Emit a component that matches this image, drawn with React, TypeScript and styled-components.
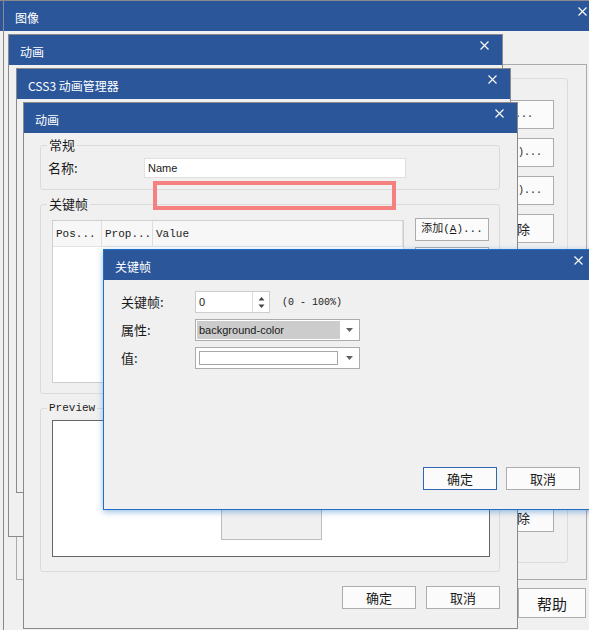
import React from "react";
import styled, { createGlobalStyle, css } from "styled-components";

const BLUE = "#2b579a";
const CJK = `"Noto Sans CJK SC", "Liberation Sans", sans-serif`;
const MONO = `"Liberation Mono", "Noto Sans CJK SC", monospace`;
const UI = `"Liberation Sans", "Noto Sans CJK SC", sans-serif`;

const GlobalStyle = createGlobalStyle`
  html, body { margin: 0; padding: 0; }
  body { background: #f0f0f0; font-family: ${CJK}; }
  * { box-sizing: border-box; }
`;

const Desktop = styled.div`
  position: relative;
  width: 589px;
  height: 630px;
  overflow: hidden;
  background: #f0f0f0;
`;

const Win = styled.div<{ $x: number; $y: number; $w: number; $h: number; $active?: boolean }>`
  position: absolute;
  left: ${(p) => p.$x}px;
  top: ${(p) => p.$y}px;
  width: ${(p) => p.$w}px;
  height: ${(p) => p.$h}px;
  display: flex;
  flex-direction: column;
  background: #f0f0f0;
  border: 1px solid ${(p) => (p.$active ? "#1f6fc5" : "#8a8a8a")};
  ${(p) =>
    p.$active &&
    css`
      box-shadow: 0 2px 6px rgba(40, 110, 200, 0.45);
    `}
`;

const TitleBar = styled.div`
  flex: none;
  height: 30px;
  background: ${BLUE};
  color: #fff;
  display: flex;
  align-items: flex-start;
  justify-content: space-between;
  padding-left: 11px;
`;

const TitleText = styled.span`
  font-family: ${CJK};
  font-size: 12px;
  line-height: 16px;
  margin-top: 9px;
  white-space: nowrap;
`;

const CloseIcon = styled.svg`
  flex: none;
  width: 9px;
  height: 9px;
  margin-top: 6px;
  margin-right: 13px;
`;

const Close = () => (
  <CloseIcon viewBox="0 0 9 9">
    <path d="M0.5 0.5 L8.5 8.5 M8.5 0.5 L0.5 8.5" stroke="#fff" strokeWidth="1.1" fill="none" />
  </CloseIcon>
);

const Title = ({ text }: { text: string }) => (
  <TitleBar>
    <TitleText>{text}</TitleText>
    <Close />
  </TitleBar>
);

/* ---------- generic controls ---------- */

const Btn = styled.button<{ $w?: number; $h?: number; $primary?: boolean; $mono?: boolean; $size?: number }>`
  flex: none;
  width: ${(p) => p.$w ?? 74}px;
  height: ${(p) => p.$h ?? 23}px;
  padding: 0;
  border: 1px solid ${(p) => (p.$primary ? "#2f66ad" : "#adadad")};
  background: #fbfbfb;
  color: #1a1a1a;
  font-family: ${(p) => (p.$mono ? MONO : CJK)};
  font-size: ${(p) => p.$size ?? 13}px;
  line-height: 1;
  white-space: nowrap;
  overflow: hidden;
  display: flex;
  align-items: center;
  justify-content: center;
`;

const Group = styled.fieldset<{ $pad: string }>`
  margin: 0;
  min-width: 0;
  border: 1px solid #dadada;
  border-radius: 3px;
  padding: ${(p) => p.$pad};
`;

const Legend = styled.legend<{ $mono?: boolean }>`
  margin-left: 6px;
  padding: 0 2px;
  font-family: ${(p) => (p.$mono ? MONO : CJK)};
  font-size: ${(p) => (p.$mono ? 11 : 13)}px;
  line-height: 16px;
  color: #1a1a1a;
`;

const Label = styled.span<{ $w?: number }>`
  flex: none;
  width: ${(p) => (p.$w ? `${p.$w}px` : "auto")};
  font-family: ${CJK};
  font-size: 13px;
  line-height: 18px;
  color: #1a1a1a;
`;

/* ---------- window 1 (图像) ---------- */

const ShellBody = styled.div`
  flex: 1;
  display: flex;
  flex-direction: column;
  align-items: flex-start;
  padding: 33px 0 0 12px;
`;

const ShellPanel = styled.div`
  width: 571px;
  height: 516px;
  border: 1px solid #ababab;
  padding: 13px 18px 16px 30px;
  display: flex;
`;

const ShellFrame = styled.div`
  flex: 1;
  border: 1px solid #dcdcdc;
  border-radius: 3px;
  display: flex;
  flex-direction: column;
  align-items: flex-end;
  gap: 9px;
  padding: 21px 13px 30px;
`;

const Spacer = styled.div`
  flex: 1;
`;

const ShellFooter = styled.div`
  width: 571px;
  margin-top: 8px;
  display: flex;
  justify-content: flex-end;
  padding-right: 1px;
`;

/* ---------- window 4 (动画) ---------- */

const FormBody = styled.div`
  flex: 1;
  display: flex;
  flex-direction: column;
  gap: 6px;
  padding: 4px 17px 18px 16px;
`;

const FieldRow = styled.div`
  display: flex;
  align-items: center;
  padding-left: 7px;
`;

const TextBox = styled.div<{ $w: number }>`
  width: ${(p) => p.$w}px;
  height: 20px;
  border: 1px solid #e0e0e0;
  background: #fff;
  font-family: ${UI};
  font-size: 11px;
  line-height: 18px;
  padding-left: 3px;
  color: #1a1a1a;
`;

const KeyRow = styled.div`
  display: flex;
  align-items: flex-start;
  gap: 11px;
  padding: 0 10px 0 11px;
`;

const ListView = styled.div`
  margin-top: 2px;
  width: 352px;
  height: 163px;
  border: 1px solid #cfcfcf;
  background: #fff;
`;

const ListHeader = styled.div`
  display: grid;
  grid-template-columns: 49px 51px 1fr;
  height: 26px;
  border-bottom: 1px solid #e2e2e2;
  background: #f7f7f7;
`;

const HeadCell = styled.div`
  border-right: 1px solid #dedede;
  font-family: ${MONO};
  font-size: 11px;
  line-height: 26px;
  padding-left: 3px;
  color: #222;
  white-space: nowrap;
  overflow: hidden;
`;

const SideButtons = styled.div`
  display: flex;
  flex-direction: column;
  gap: 6px;
`;

const PreviewBox = styled.div`
  height: 137px;
  margin: 0 9px 0 11px;
  border: 1px solid #666;
  background: #fff;
  display: flex;
  align-items: center;
  justify-content: center;
`;

const PreviewSwatch = styled.div`
  width: 101px;
  height: 103px;
  border: 1px solid #bdbdbd;
  background: #f0f0f0;
`;

const Footer = styled.div`
  margin-top: 8px;
  display: flex;
  justify-content: flex-end;
  gap: 10px;
`;

const Highlight = styled.div`
  position: absolute;
  left: 153px;
  top: 181px;
  width: 243px;
  height: 29px;
  border: 4px solid #f48080;
`;

/* ---------- keyframe dialog ---------- */

const DlgBody = styled.div`
  flex: 1;
  display: flex;
  flex-direction: column;
  padding: 11px 16px 19px 17px;
`;

const FormGrid = styled.div`
  display: grid;
  grid-template-columns: 74px auto;
  grid-auto-rows: 22px;
  row-gap: 6px;
  align-items: center;
  justify-content: start;
`;

const SpinRow = styled.div`
  display: flex;
  align-items: center;
  gap: 12px;
`;

const Spin = styled.div`
  display: flex;
  width: 75px;
  height: 22px;
  border: 1px solid #cdcdcd;
  background: #fff;
`;

const SpinInput = styled.div`
  flex: 1;
  font-family: ${UI};
  font-size: 11px;
  line-height: 20px;
  padding-left: 3px;
  color: #1a1a1a;
`;

const SpinButtons = styled.div`
  width: 17px;
  border-left: 1px solid #dcdcdc;
  display: flex;
  align-items: center;
  justify-content: center;
`;

const RangeText = styled.span`
  font-family: ${MONO};
  font-size: 10px;
  color: #222;
`;

const Combo = styled.div`
  display: flex;
  width: 165px;
  height: 22px;
  border: 1px solid #acacac;
  background: #fff;
  padding: 1px;
`;

const ComboSel = styled.div<{ $empty?: boolean }>`
  flex: 1;
  font-family: ${UI};
  font-size: 11px;
  line-height: 18px;
  padding-left: 2px;
  color: #1a1a1a;
  ${(p) =>
    p.$empty
      ? css`
          margin: 2px;
          border: 1px solid #a6a6a6;
          background: #fff;
        `
      : css`
          background: #cccccc;
        `}
`;

const ComboArrow = styled.div`
  width: 18px;
  display: flex;
  align-items: center;
  justify-content: center;
`;

const DlgFooter = styled.div`
  margin-top: auto;
  display: flex;
  justify-content: flex-end;
  gap: 9px;
`;

const Arrow = () => (
  <svg width="7" height="4" viewBox="0 0 7 4">
    <path d="M0 0 L7 0 L3.5 4 Z" fill="#606060" />
  </svg>
);

const SpinArrows = () => (
  <svg width="7" height="13" viewBox="0 0 7 13">
    <path d="M0.5 4.5 L6.5 4.5 L3.5 1 Z" fill="#444" />
    <path d="M0.5 8.5 L6.5 8.5 L3.5 12 Z" fill="#444" />
  </svg>
);

export default function App() {
  return (
    <>
      <GlobalStyle />
      <Desktop>
        {/* main application window behind everything */}
        <Win $x={-30} $y={0} $w={700} $h={700}>
          <TitleBar />
        </Win>

        {/* 图像 */}
        <Win $x={3} $y={0} $w={598} $h={650}>
          <Title text="图像" />
          <ShellBody>
            <ShellPanel>
              <ShellFrame>
                <Btn $w={80} $h={29} $mono $size={10}>新建...</Btn>
                <Btn $w={80} $h={29} $mono $size={10}>编辑(E)...</Btn>
                <Btn $w={80} $h={29} $mono $size={10}>复制(C)...</Btn>
                <Btn $w={74} $h={29}>删除</Btn>
                <Spacer />
                <Btn $w={74} $h={29}>删除</Btn>
              </ShellFrame>
            </ShellPanel>
            <ShellFooter>
              <Btn $w={68} $h={30} $size={15}>帮助</Btn>
            </ShellFooter>
          </ShellBody>
        </Win>

        {/* 动画 */}
        <Win $x={8} $y={34} $w={495} $h={503}>
          <Title text="动画" />
        </Win>

        {/* CSS3 动画管理器 */}
        <Win $x={16} $y={68} $w={495} $h={425}>
          <Title text="CSS3 动画管理器" />
        </Win>

        {/* 动画 (front) */}
        <Win $x={23} $y={102} $w={495} $h={527}>
          <Title text="动画" />
          <FormBody>
            <Group $pad="5px 0 11px">
              <Legend>常规</Legend>
              <FieldRow>
                <Label $w={96}>名称:</Label>
                <TextBox $w={262}>Name</TextBox>
              </FieldRow>
            </Group>
            <Group $pad="6px 0 10px">
              <Legend>关键帧</Legend>
              <KeyRow>
                <ListView>
                  <ListHeader>
                    <HeadCell>Pos...</HeadCell>
                    <HeadCell>Prop...</HeadCell>
                    <HeadCell>Value</HeadCell>
                  </ListHeader>
                </ListView>
                <SideButtons>
                  <Btn $mono $size={11}>
                    添加(<u>A</u>)...
                  </Btn>
                  <Btn $mono $size={11}>编辑(E)...</Btn>
                  <Btn $mono $size={11}>删除(D)</Btn>
                </SideButtons>
              </KeyRow>
            </Group>
            <Group $pad="4px 0 14px">
              <Legend $mono>Preview</Legend>
              <PreviewBox>
                <PreviewSwatch />
              </PreviewBox>
            </Group>
            <Footer>
              <Btn>确定</Btn>
              <Btn>取消</Btn>
            </Footer>
          </FormBody>
        </Win>

        <Highlight />

        {/* 关键帧 dialog */}
        <Win $x={103} $y={249} $w={494} $h={261} $active>
          <Title text="关键帧" />
          <DlgBody>
            <FormGrid>
              <Label>关键帧:</Label>
              <SpinRow>
                <Spin>
                  <SpinInput>0</SpinInput>
                  <SpinButtons>
                    <SpinArrows />
                  </SpinButtons>
                </Spin>
                <RangeText>(0 - 100%)</RangeText>
              </SpinRow>
              <Label>属性:</Label>
              <Combo>
                <ComboSel>background-color</ComboSel>
                <ComboArrow>
                  <Arrow />
                </ComboArrow>
              </Combo>
              <Label>值:</Label>
              <Combo>
                <ComboSel $empty />
                <ComboArrow>
                  <Arrow />
                </ComboArrow>
              </Combo>
            </FormGrid>
            <DlgFooter>
              <Btn $primary>确定</Btn>
              <Btn>取消</Btn>
            </DlgFooter>
          </DlgBody>
        </Win>
      </Desktop>
    </>
  );
}
